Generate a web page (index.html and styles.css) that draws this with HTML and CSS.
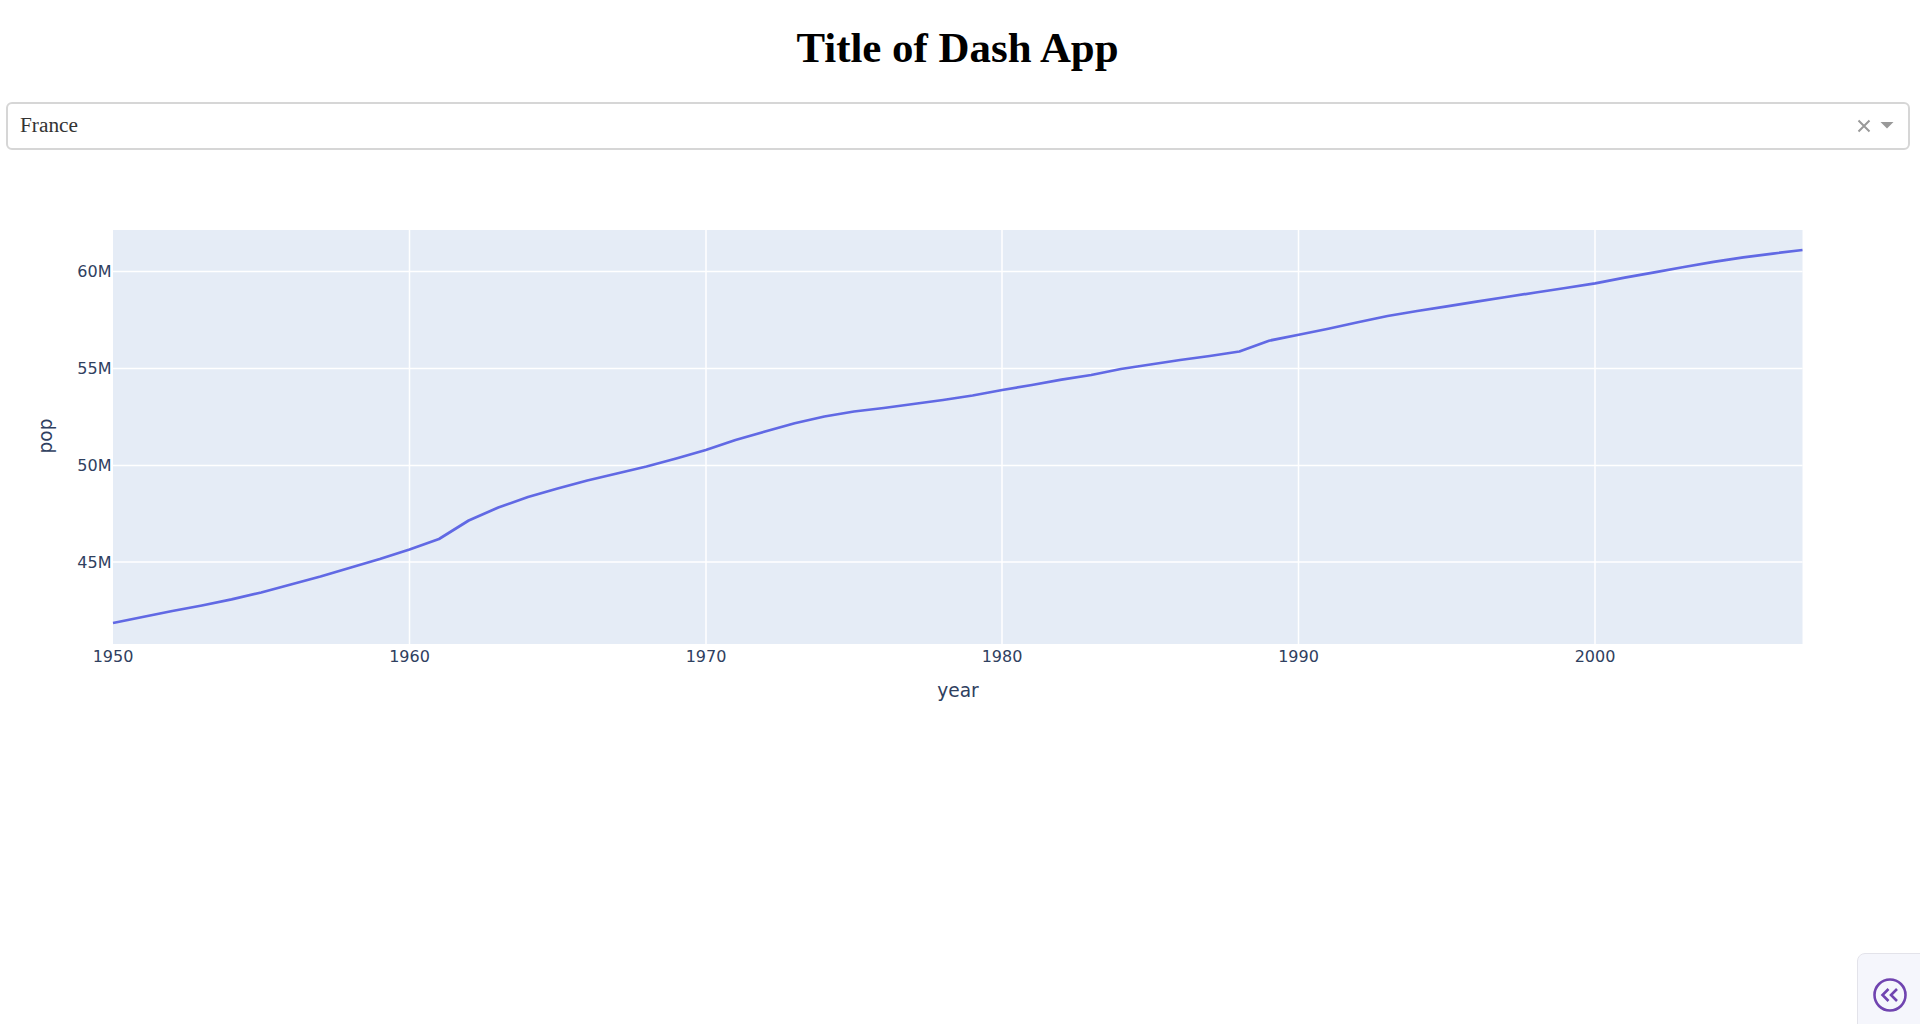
FILE: index.html
```html
<!DOCTYPE html>
<html lang="en">
<head>
  <meta charset="UTF-8" />
  <title>Title of Dash App</title>
  <link rel="stylesheet" href="styles.css">
</head>
<body>

  <h1>Title of Dash App</h1>

  <div class="dropdown">
    <span class="dropdown-value">France</span>
    <svg class="dropdown-clear" width="14" height="14" viewBox="0 0 14 14">
      <path d="M1.5 1.5 L12.5 12.5 M12.5 1.5 L1.5 12.5" />
    </svg>
    <svg class="dropdown-arrow" width="14" height="7" viewBox="0 0 14 7">
      <path d="M0.5 0 H13.5 L7 6.5 Z" />
    </svg>
  </div>

  <!-- viewBox uses page coordinates so the numbers line up with the plot -->
  <svg class="graph" viewBox="5.5 150 1904 574">
    <rect class="plot-bg" x="112.5" y="230" width="1689.5" height="414" />

    <g class="grid">
      <line x1="409" y1="230" x2="409" y2="644" />
      <line x1="705.5" y1="230" x2="705.5" y2="644" />
      <line x1="1001.5" y1="230" x2="1001.5" y2="644" />
      <line x1="1298" y1="230" x2="1298" y2="644" />
      <line x1="1594.5" y1="230" x2="1594.5" y2="644" />
      <line x1="112.5" y1="271.5" x2="1802" y2="271.5" />
      <line x1="112.5" y1="368.5" x2="1802" y2="368.5" />
      <line x1="112.5" y1="465.5" x2="1802" y2="465.5" />
      <line x1="112.5" y1="562" x2="1802" y2="562" />
    </g>

    <polyline class="trace" points="112.5,623 142.1,617 171.8,611 201.4,605.5 231.1,599.4 260.7,592.5 290.3,584.5 320,576.5 349.6,567.7 379.3,559 409,549.5 438.5,539 468.2,520.5 497.8,507.5 527.5,497 557.1,488.5 586.8,480.5 616.4,473.5 646,466.5 675.7,458.5 705.3,450 735,440 764.6,431.5 794.2,423.3 823.9,416.5 853.5,411.5 883.2,408 912.8,404 942.5,400 972.1,395.5 1001.7,390 1031.4,385 1061,379.6 1090.7,375 1120.3,369 1149.9,364.5 1179.6,360 1209.2,356 1238.9,351.5 1268.5,340.7 1298.2,334.8 1327.8,328.7 1357.4,322.3 1387.1,316 1416.7,311 1446.4,306.4 1476,301.7 1505.7,297 1535.3,292.5 1564.9,288 1594.6,283.3 1624.2,277.7 1653.9,272.4 1683.5,267 1713.1,261.8 1742.8,257.3 1772.4,253.6 1802,250" />

    <g class="x-ticks">
      <text x="112.5" y="661.5">1950</text>
      <text x="409" y="661.5">1960</text>
      <text x="705.5" y="661.5">1970</text>
      <text x="1001.5" y="661.5">1980</text>
      <text x="1298" y="661.5">1990</text>
      <text x="1594.5" y="661.5">2000</text>
    </g>
    <g class="y-ticks">
      <text x="111" y="277">60M</text>
      <text x="111" y="374">55M</text>
      <text x="111" y="471">50M</text>
      <text x="111" y="567.5">45M</text>
    </g>

    <text class="axis-title" x="957.5" y="697">year</text>
    <text class="axis-title" transform="translate(51 436) rotate(-90)">pop</text>
  </svg>

  <button class="debug-toggle" type="button" aria-label="Toggle debug menu">
    <svg width="34" height="34" viewBox="0 0 34 34">
      <circle cx="17" cy="17" r="15.5" />
      <path d="M15.5 11 L9.5 17 L15.5 23 M24 11 L18 17 L24 23" />
    </svg>
  </button>

</body>
</html>
```

FILE: styles.css
```css
* {
  box-sizing: border-box;
}

body {
  margin: 0;
  padding: 0 10.5px 0 5.5px;
  background: #fff;
  font-family: "Liberation Serif", "Times New Roman", serif;
}

h1 {
  margin: 0;
  padding-top: 24px;
  height: 102px;
  font-size: 42.9px;
  line-height: 48px;
  text-align: center;
  color: #000;
}

.dropdown {
  display: flex;
  align-items: center;
  height: 48px;
  padding: 0 13.5px 2px 12.5px;
  border: 2px solid #d6d6d6;
  border-radius: 6px;
  font-size: 21.3px;
  color: #333;
}

.dropdown-value {
  flex: 1;
}

.dropdown-clear {
  margin-right: 9.5px;
  margin-top: 2px;
}

.dropdown-clear path {
  stroke: #999;
  stroke-width: 2;
  fill: none;
}

.dropdown-arrow {
  margin-top: 1px;
}

.dropdown-arrow path {
  fill: #999;
}

.graph {
  display: block;
  width: 100%;
  height: 574px;
}

.plot-bg {
  fill: #e5ecf6;
}

.grid line {
  stroke: #fff;
  stroke-width: 1.5;
}

.trace {
  fill: none;
  stroke: #6169e4;
  stroke-width: 2.7;
  stroke-linejoin: round;
}

.x-ticks text,
.y-ticks text,
.axis-title {
  font-family: "DejaVu Sans", Verdana, sans-serif;
  fill: #2f4060;
}

.x-ticks text,
.y-ticks text {
  font-size: 16px;
}

.x-ticks text {
  text-anchor: middle;
}

.y-ticks text {
  text-anchor: end;
}

.axis-title {
  font-size: 18.6px;
  text-anchor: middle;
}

/* Dash debug tab, pinned to the corner and cut off by the window */
.debug-toggle {
  position: fixed;
  right: -10px;
  bottom: -10px;
  width: 73px;
  height: 81px;
  padding: 23.5px 0 0 14.5px;
  display: flex;
  align-items: flex-start;
  background: #f5f6fc;
  border: 1.5px solid #e3e3ea;
  border-radius: 8px;
}

.debug-toggle circle,
.debug-toggle path {
  fill: none;
  stroke: #7044b0;
  stroke-width: 2.6;
}
```
